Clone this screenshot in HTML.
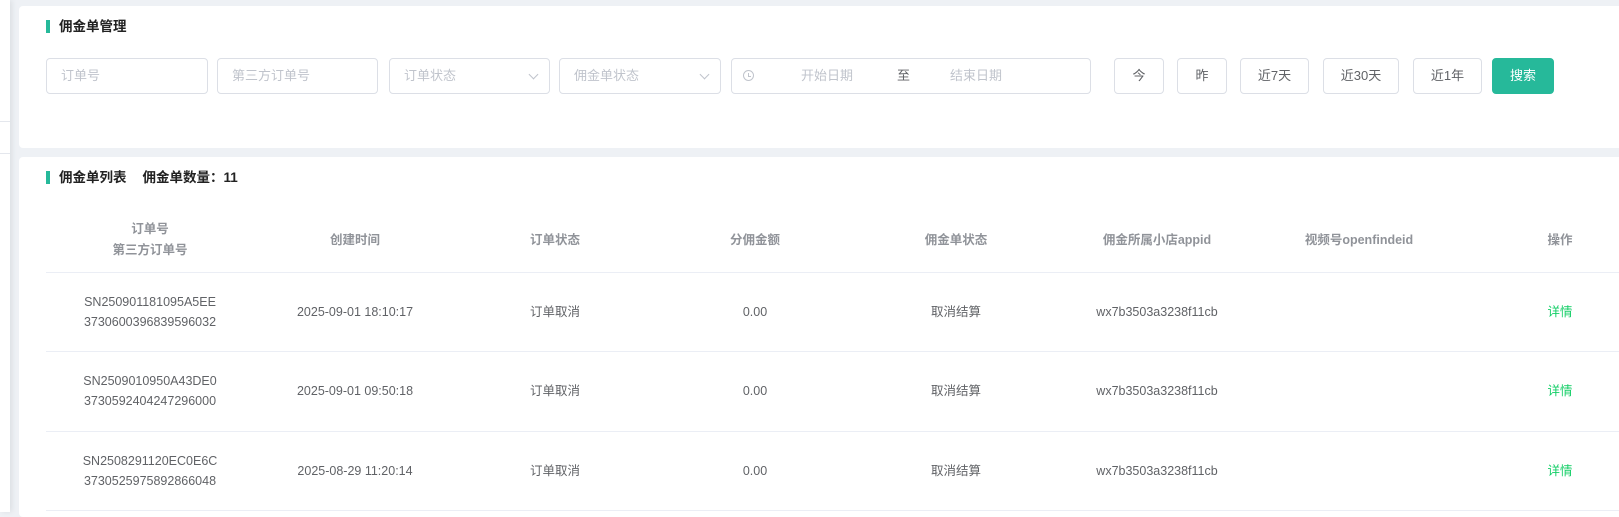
<!DOCTYPE html>
<html><head><meta charset="utf-8"><style>
*{margin:0;padding:0;box-sizing:border-box}
body{width:1619px;height:512px;overflow:hidden;background:#eef1f5;font-family:"Liberation Sans","Noto Sans CJK SC",sans-serif;position:relative}
.a{position:absolute}
.strip{left:0;top:0;width:10px;height:512px;background:#fff;box-shadow:2px 0 6px rgba(0,0,0,.08)}
.card{left:19px;width:1600px;background:#fff;border-radius:4px 0 0 4px}
.bar{width:4px;height:13px;background:#26b99a}
.tt{font-size:13.5px;font-weight:bold;color:#222;line-height:16px}
.in{top:58px;height:36px;border:1px solid #dcdfe6;border-radius:4px;font-size:13px;color:#c0c4cc;line-height:34px;padding-left:14px}
.btn{top:58px;height:36px;border:1px solid #dcdfe6;border-radius:4px;font-size:13px;color:#606266;line-height:34px;text-align:center}
.chev{position:absolute;right:12px;top:12px;width:7px;height:7px;border-right:1px solid #c0c4cc;border-bottom:1px solid #c0c4cc;transform:rotate(45deg)}
.h{font-size:12.5px;font-weight:bold;color:#909399;text-align:center;line-height:21px;transform:translateX(-50%);white-space:nowrap}
.c{font-size:12.5px;color:#606266;text-align:center;line-height:20px;transform:translateX(-50%);white-space:nowrap}
.line{left:46px;width:1573px;height:1px;background:#ebeef5}
</style></head><body>
<div class="a strip"></div>
<div class="a" style="left:0;top:121px;width:10px;height:1px;background:#e4e7ed"></div>
<div class="a" style="left:0;top:153px;width:10px;height:1px;background:#e4e7ed"></div>
<div class="a card" style="top:6px;height:142px"></div>
<div class="a card" style="top:157px;height:360px"></div>

<div class="a bar" style="left:46px;top:20px"></div>
<div class="a tt" style="left:59px;top:19px">佣金单管理</div>

<div class="a in" style="left:46px;width:162px">订单号</div>
<div class="a in" style="left:217px;width:161px">第三方订单号</div>
<div class="a in" style="left:389px;width:161px">订单状态<span class="chev"></span></div>
<div class="a in" style="left:559px;width:162px">佣金单状态<span class="chev"></span></div>
<div class="a in" style="left:731px;width:360px;padding:0">
 <span class="a" style="left:11px;top:11px;width:11px;height:11px;border:1px solid #c0c4cc;border-radius:50%"></span>
 <span class="a" style="left:16px;top:14px;width:1px;height:4px;background:#c0c4cc"></span>
 <span class="a" style="left:16px;top:17px;width:3px;height:1px;background:#c0c4cc"></span>
 <span class="a" style="left:69px;top:0">开始日期</span>
 <span class="a" style="left:165px;top:0;color:#606266">至</span>
 <span class="a" style="left:218px;top:0">结束日期</span>
</div>
<div class="a btn" style="left:1114px;width:50px">今</div>
<div class="a btn" style="left:1177px;width:50px">昨</div>
<div class="a btn" style="left:1240px;width:69px">近7天</div>
<div class="a btn" style="left:1323px;width:76px">近30天</div>
<div class="a btn" style="left:1413px;width:69px">近1年</div>
<div class="a btn" style="left:1492px;width:62px;background:#26b99a;border-color:#26b99a;color:#fff">搜索</div>

<div class="a bar" style="left:46px;top:171px"></div>
<div class="a tt" style="left:59px;top:170px">佣金单列表<span style="margin-left:16px">佣金单数量：11</span></div>

<div class="a h" style="left:150px;top:219px">订单号<br>第三方订单号</div>
<div class="a h" style="left:355px;top:230px">创建时间</div>
<div class="a h" style="left:555px;top:230px">订单状态</div>
<div class="a h" style="left:755px;top:230px">分佣金额</div>
<div class="a h" style="left:956px;top:230px">佣金单状态</div>
<div class="a h" style="left:1157px;top:230px">佣金所属小店appid</div>
<div class="a h" style="left:1359px;top:230px">视频号openfindeid</div>
<div class="a h" style="left:1560px;top:230px">操作</div>
<div class="a line" style="top:272px"></div>

<div class="a c" style="left:150px;top:292px">SN250901181095A5EE<br>3730600396839596032</div>
<div class="a c" style="left:355px;top:302px">2025-09-01 18:10:17</div>
<div class="a c" style="left:555px;top:302px">订单取消</div>
<div class="a c" style="left:755px;top:302px">0.00</div>
<div class="a c" style="left:956px;top:302px">取消结算</div>
<div class="a c" style="left:1157px;top:302px">wx7b3503a3238f11cb</div>
<div class="a c" style="left:1560px;top:302px;color:#13ce66">详情</div>
<div class="a line" style="top:351px"></div>

<div class="a c" style="left:150px;top:371px">SN2509010950A43DE0<br>3730592404247296000</div>
<div class="a c" style="left:355px;top:381px">2025-09-01 09:50:18</div>
<div class="a c" style="left:555px;top:381px">订单取消</div>
<div class="a c" style="left:755px;top:381px">0.00</div>
<div class="a c" style="left:956px;top:381px">取消结算</div>
<div class="a c" style="left:1157px;top:381px">wx7b3503a3238f11cb</div>
<div class="a c" style="left:1560px;top:381px;color:#13ce66">详情</div>
<div class="a line" style="top:431px"></div>

<div class="a c" style="left:150px;top:451px">SN2508291120EC0E6C<br>3730525975892866048</div>
<div class="a c" style="left:355px;top:461px">2025-08-29 11:20:14</div>
<div class="a c" style="left:555px;top:461px">订单取消</div>
<div class="a c" style="left:755px;top:461px">0.00</div>
<div class="a c" style="left:956px;top:461px">取消结算</div>
<div class="a c" style="left:1157px;top:461px">wx7b3503a3238f11cb</div>
<div class="a c" style="left:1560px;top:461px;color:#13ce66">详情</div>
<div class="a line" style="top:510px"></div>
</body></html>
